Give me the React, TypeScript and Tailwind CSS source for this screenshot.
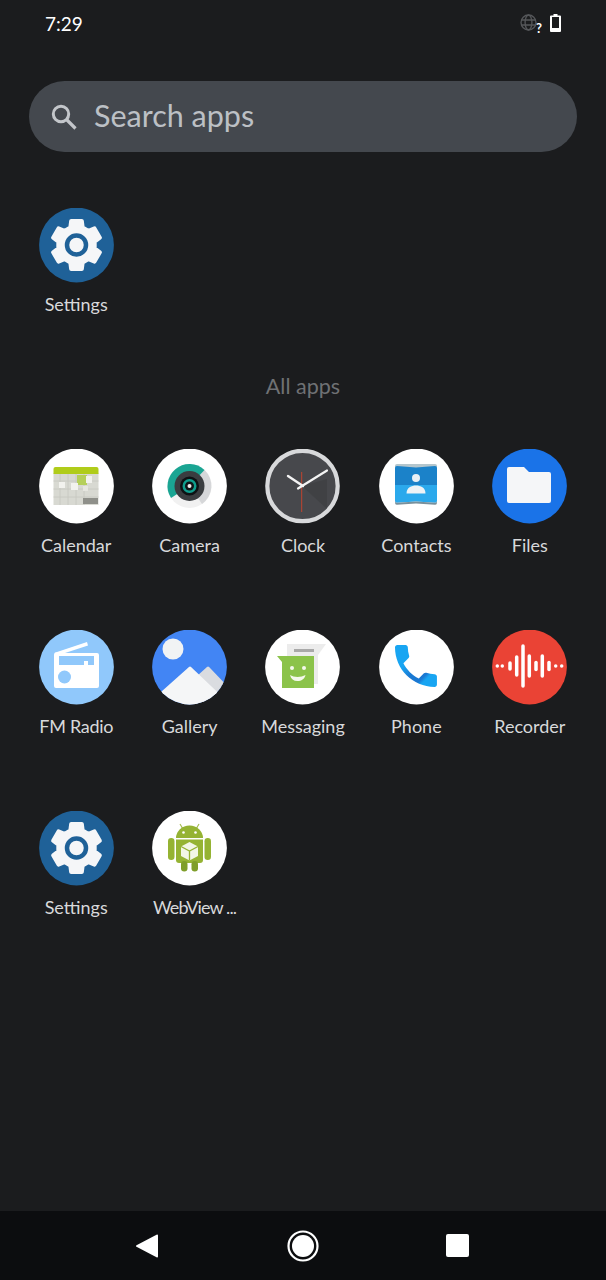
import type { ReactNode } from "react";

function gearPath(cx: number, cy: number) {
  const pts: string[] = [];
  for (let i = 0; i < 6; i++) {
    const a = (i * 60 - 90) * (Math.PI / 180);
    const spread = [
      [-0.34, 18.5],
      [-0.22, 24.5],
      [0.22, 24.5],
      [0.34, 18.5],
    ];
    for (const [d, r] of spread) {
      pts.push(`${(cx + Math.cos(a + d) * r).toFixed(2)},${(cy + Math.sin(a + d) * r).toFixed(2)}`);
    }
  }
  return `M${pts.join("L")}Z`;
}

function Icon({ children }: { children: ReactNode }) {
  return (
    <svg viewBox="0 0 75 75" className="h-[75px] w-[75px] shrink-0">
      {children}
    </svg>
  );
}

function SettingsIcon() {
  return (
    <Icon>
      <circle cx="37.5" cy="37" r="37.400" fill="#1f6198" />
      <path d={gearPath(37.5, 37)} fill="#f5f6f8" stroke="#f5f6f8" strokeWidth="4" strokeLinejoin="round" />
      <circle cx="37.5" cy="37" r="9.500" fill="#f5f6f8" stroke="#1f6198" strokeWidth="4.500" />
    </Icon>
  );
}

function CalendarIcon() {
  return (
    <Icon>
      <circle cx="37.5" cy="37" r="37.400" fill="#fff" />
      <rect x="14.5" y="24" width="45" height="32" fill="#d8d9d2" />
      <path d="M14.5 20a2 2 0 0 1 2-2h41a2 2 0 0 1 2 2v5h-45z" fill="#b0cc1a" />
      <path d="M21 25v31M29 25v31M37 25v31M45 25v31M14.5 32h45M14.5 40h45M14.5 48h45" stroke="#c6c7bf" strokeWidth="0.8" />
      <rect x="38" y="26" width="10" height="10" fill="#b5cf5a" />
      <rect x="47" y="27" width="6" height="7" fill="#f2f2ee" />
      <rect x="20" y="33" width="6" height="6" fill="#f2f2ee" />
      <rect x="32" y="34" width="7" height="7" fill="#f2f2ee" />
      <rect x="44" y="37" width="5" height="5" fill="#e6e6e0" />
      <rect x="44" y="49" width="15" height="6" fill="#8f908a" />
    </Icon>
  );
}

function CameraIcon() {
  return (
    <Icon>
      <circle cx="37.5" cy="37" r="37.400" fill="#fff" />
      <circle cx="37.5" cy="37" r="22" fill="#f1f1f1" />
      <path d="M52.5 21A22 22 0 0 1 50 55L37.5 37z" fill="#d6d7d9" />
      <path d="M52.5 21A22 22 0 0 0 19 49L37.5 37z" fill="#1aa593" />
      <circle cx="37.5" cy="37" r="15" fill="#3a3d40" />
      <circle cx="37.5" cy="37" r="9.500" fill="#0d1113" />
      <circle cx="37.5" cy="37" r="7" fill="#0f9d8c" />
      <circle cx="37.5" cy="37" r="4.500" fill="#101416" />
      <circle cx="37.5" cy="37" r="2" fill="#f2f2f2" />
    </Icon>
  );
}

function ClockIcon() {
  return (
    <Icon>
      <circle cx="37.5" cy="37" r="35.200" fill="#47484c" stroke="#d8d9db" strokeWidth="4.200" />
      <path d="M37 37L62 60L62 30z" fill="#3c3d40" opacity="0.6" />
      <path d="M36.7 23V63" stroke="#c0442f" strokeWidth="1" />
      <path d="M33 39.5L62 21.500" stroke="#f4f4f4" strokeWidth="2.200" strokeLinecap="round" />
      <path d="M38 37L23 27" stroke="#f4f4f4" strokeWidth="2.400" strokeLinecap="round" />
    </Icon>
  );
}

function ContactsIcon() {
  return (
    <Icon>
      <circle cx="37.5" cy="37" r="37.400" fill="#fff" />
      <path d="M18 15H56Q58 15 58 17V30H16V17Q16 15 18 15z" fill="#b4c6cd" />
      <path d="M18 17L37 18.500L56 17Q58 17 58 19V36H16V19Q16 17 18 17z" fill="#1b82c9" />
      <path d="M16 36H58V52Q58 54 56 53.800L37 52.500L18 53.800Q16 54 16 52z" fill="#2ba9ec" />
      <path d="M16 52Q16 54 18 53.800L37 52.500L56 53.800Q58 54 58 52V53.500Q58 56 56 55.800L37 54.500L18 55.800Q16 56 16 53.500z" fill="#78909c" />
      <circle cx="37" cy="29" r="4" fill="#e9f0f5" />
      <path d="M27.5 44.500c0-6 5-8 9.500-8s9.500 2 9.500 8z" fill="#eef3f6" />
    </Icon>
  );
}

function FilesIcon() {
  return (
    <Icon>
      <circle cx="37.5" cy="37" r="37.400" fill="#1a73e8" />
      <path d="M17 18h15l5 5h20a2 2 0 0 1 2 2v27a2 2 0 0 1-2 2H17a2 2 0 0 1-2-2V20a2 2 0 0 1 2-2z" fill="#f5f6f8" />
    </Icon>
  );
}

function RadioIcon() {
  return (
    <Icon>
      <circle cx="37.5" cy="37" r="37.400" fill="#90c8fb" />
      <path d="M18 22L48 12L49 15.500L26 23H58a2 2 0 0 1 2 2V56a2 2 0 0 1-2 2H17a2 2 0 0 1-2-2V25a3 3 0 0 1 3-3z" fill="#fff" />
      <path d="M20 26H55V35H49V31H45V35H20z" fill="#90c8fb" />
      <circle cx="25.5" cy="47" r="6.500" fill="#90c8fb" />
    </Icon>
  );
}

function GalleryIcon() {
  return (
    <Icon>
      <defs>
        <clipPath id="gallery-clip">
          <circle cx="37.5" cy="37" r="37.400" />
        </clipPath>
      </defs>
      <circle cx="37.5" cy="37" r="37.400" fill="#4285f4" />
      <circle cx="21" cy="19" r="10.500" fill="#f1f3f4" />
      <g clipPath="url(#gallery-clip)">
        <path d="M56 38L78 61V78H30L46 47z" fill="#dadce0" stroke="#dadce0" strokeWidth="3" strokeLinejoin="round" />
        <path d="M38 38L80 78H-5L0 72z" fill="#f5f6f7" stroke="#f5f6f7" strokeWidth="3" strokeLinejoin="round" />
      </g>
    </Icon>
  );
}

function MessagingIcon() {
  return (
    <Icon>
      <circle cx="37.5" cy="37" r="37.400" fill="#fff" />
      <path d="M22 14H61L53 25V54H22z" fill="#ececec" />
      <rect x="29" y="19" width="20" height="3" fill="#a9a9a9" />
      <path d="M12 26H49V58H17V32z" fill="#8bc34a" />
      <circle cx="27" cy="38" r="2" fill="#f4f8ec" />
      <circle cx="39" cy="38" r="2" fill="#f4f8ec" />
      <path d="M25 45c4 2.500 11 2.500 15.500 0c-1 4-4 6-8 6s-6.500-2-7.500-6z" fill="#f4f8ec" />
    </Icon>
  );
}

function PhoneIcon() {
  return (
    <Icon>
      <defs>
        <linearGradient id="phone-grad" x1="0" y1="0" x2="1" y2="1">
          <stop offset="0.35" stopColor="#18a5f2" />
          <stop offset="0.55" stopColor="#1a78d2" />
          <stop offset="0.72" stopColor="#1a78d2" />
          <stop offset="0.78" stopColor="#18a5f2" />
        </linearGradient>
      </defs>
      <circle cx="37.5" cy="37" r="37.400" fill="#fff" />
      <path
        transform="translate(9 8) scale(2.33)"
        fill="url(#phone-grad)"
        d="M6.62 10.79c1.44 2.83 3.76 5.14 6.59 6.59l2.2-2.2c.27-.27.67-.36 1.02-.24 1.12.37 2.33.57 3.57.57.55 0 1 .45 1 1V20c0 .55-.45 1-1 1-9.39 0-17-7.61-17-17 0-.55.45-1 1-1h3.5c.55 0 1 .45 1 1 0 1.25.2 2.45.57 3.57.11.35.03.74-.25 1.02l-2.2 2.2z"
      />
    </Icon>
  );
}

const recorderBars = [
  [5.3, 0],
  [10.3, 0],
  [18, 6],
  [24.7, 18],
  [31, 40],
  [37.3, 20],
  [44, 7],
  [50.3, 20],
  [57, 7],
  [63.7, 0],
  [69.7, 0],
];

function RecorderIcon() {
  return (
    <Icon>
      <circle cx="37.5" cy="37" r="37.400" fill="#ea4335" />
      {recorderBars.map(([x, h]) => (
        <path
          key={x}
          d={`M${x} ${36 - h / 2}V${36 + h / 2}`}
          stroke="#fff"
          strokeWidth="3.500"
          strokeLinecap="round"
        />
      ))}
    </Icon>
  );
}

function WebViewIcon() {
  return (
    <Icon>
      <circle cx="37.5" cy="37" r="37.400" fill="#fff" />
      <path d="M28 13L31 18M47 13L44 18" stroke="#a8bf55" strokeWidth="1.200" />
      <path d="M24 27a13.500 12.500 0 0 1 27 0z" fill="#95b333" />
      <circle cx="31.5" cy="21.500" r="1.300" fill="#fff" />
      <circle cx="43.5" cy="21.500" r="1.300" fill="#fff" />
      <rect x="16" y="27" width="6.500" height="22" rx="3.200" fill="#95b333" />
      <rect x="52.5" y="27" width="6.500" height="22" rx="3.200" fill="#95b333" />
      <path d="M24 28.500H51V49a3 3 0 0 1-3 3H27a3 3 0 0 1-3-3z" fill="#95b333" />
      <rect x="29" y="50" width="6.500" height="10.500" rx="3.200" fill="#7f9e2a" />
      <rect x="39.5" y="50" width="6.500" height="10.500" rx="3.200" fill="#7f9e2a" />
      <path d="M37.5 31L46 35.500V45L37.5 49.500L29 45V35.500z" fill="#f2f6e6" />
      <path d="M29 35.500L37.500 40L46 35.500M37.500 40V49.500" stroke="#95b333" strokeWidth="1.300" fill="none" />
    </Icon>
  );
}

type AppItem = { name: string; icon: ReactNode; labelClass?: string };

const apps: AppItem[] = [
  { name: "Calendar", icon: <CalendarIcon /> },
  { name: "Camera", icon: <CameraIcon /> },
  { name: "Clock", icon: <ClockIcon /> },
  { name: "Contacts", icon: <ContactsIcon /> },
  { name: "Files", icon: <FilesIcon /> },
  { name: "FM Radio", icon: <RadioIcon />, labelClass: "tracking-[-0.3px]" },
  { name: "Gallery", icon: <GalleryIcon /> },
  { name: "Messaging", icon: <MessagingIcon /> },
  { name: "Phone", icon: <PhoneIcon /> },
  { name: "Recorder", icon: <RecorderIcon /> },
  { name: "Settings", icon: <SettingsIcon /> },
  { name: "WebView ...", icon: <WebViewIcon />, labelClass: "ml-[10px] tracking-[-0.9px]" },
];

function AppTile({ name, icon, labelClass }: AppItem) {
  return (
    <div className="flex h-[181px] flex-col items-center">
      {icon}
      <span className={`mt-[9px] text-[18px] leading-[24px] whitespace-nowrap text-[#d8d9db] ${labelClass ?? ""}`}>
        {name}
      </span>
    </div>
  );
}

export default function App() {
  return (
    <div className="flex h-[1280px] w-[606px] flex-col overflow-hidden bg-[#1b1c1e] font-['Lato','Liberation_Sans',sans-serif]">
      <div className="flex h-[46px] shrink-0 items-center justify-between px-[45px]">
        <span className="text-[19px] leading-none text-white">7:29</span>
        <div className="flex items-center gap-[12px]">
          <div className="relative h-[18px] w-[18px]">
            <svg viewBox="0 0 18 18" className="h-[18px] w-[18px]" fill="none" stroke="#55575a" strokeWidth="1.300">
              <circle cx="8.500" cy="8.500" r="7.500" />
              <ellipse cx="8.500" cy="8.500" rx="3.400" ry="7.500" />
              <path d="M1.400 6h14.200M1.400 11h14.200" />
            </svg>
            <span className="absolute right-[-4px] bottom-[-3px] text-[13px] leading-none font-bold text-white">?</span>
          </div>
          <svg viewBox="0 0 11 18" className="h-[18px] w-[11px]">
            <path d="M3.500 0h4v1.500H10a1 1 0 0 1 1 1V17a1 1 0 0 1-1 1H1a1 1 0 0 1-1-1V2.500a1 1 0 0 1 1-1h2.500z" fill="#fff" />
            <rect x="2" y="3" width="7" height="11" fill="#1b1c1e" />
          </svg>
        </div>
      </div>

      <div className="mx-[29px] mt-[35px] flex h-[71px] shrink-0 items-center rounded-full bg-[#44484e] pl-[22px]">
        <svg viewBox="0 0 26 26" className="h-[26px] w-[26px] shrink-0" fill="none" stroke="#c3c6ca">
          <circle cx="10" cy="10" r="7.700" strokeWidth="3" />
          <path d="M15.500 15.500L24.500 24.500" strokeWidth="3.200" />
        </svg>
        <span className="mb-[2px] ml-[17px] text-[30.500px] leading-none text-[#bcc0c5]">Search apps</span>
      </div>

      <div className="mt-[56px] grid grid-cols-5 px-[19.500px]">
        <div className="flex flex-col items-center">
          <SettingsIcon />
          <span className="mt-[9px] text-[18px] leading-[24px] text-[#d8d9db]">Settings</span>
        </div>
      </div>

      <div className="mt-[57px] text-center text-[21.500px] leading-[26px] text-[#6f7174]">All apps</div>

      <div className="mt-[50px] grid grid-cols-5 px-[19.500px]">
        {apps.map((app) => (
          <AppTile key={app.name} {...app} />
        ))}
      </div>

      <div className="mt-auto flex h-[69px] shrink-0 items-center justify-between bg-[#0c0d0f] pr-[137px] pl-[135px]">
        <svg viewBox="0 0 24 24" className="h-[24px] w-[24px]">
          <path d="M23 1.500V22.500a1 1 0 0 1-1.500.8L1.500 12.800a1 1 0 0 1 0-1.600L21.500.7A1 1 0 0 1 23 1.500z" fill="#fff" />
        </svg>
        <svg viewBox="0 0 32 32" className="h-[32px] w-[32px]">
          <circle cx="16" cy="16" r="14.500" fill="none" stroke="#fff" strokeWidth="2.200" />
          <circle cx="16" cy="16" r="11" fill="#fff" />
        </svg>
        <div className="h-[23px] w-[23px] rounded-[2px] bg-white" />
      </div>
    </div>
  );
}
